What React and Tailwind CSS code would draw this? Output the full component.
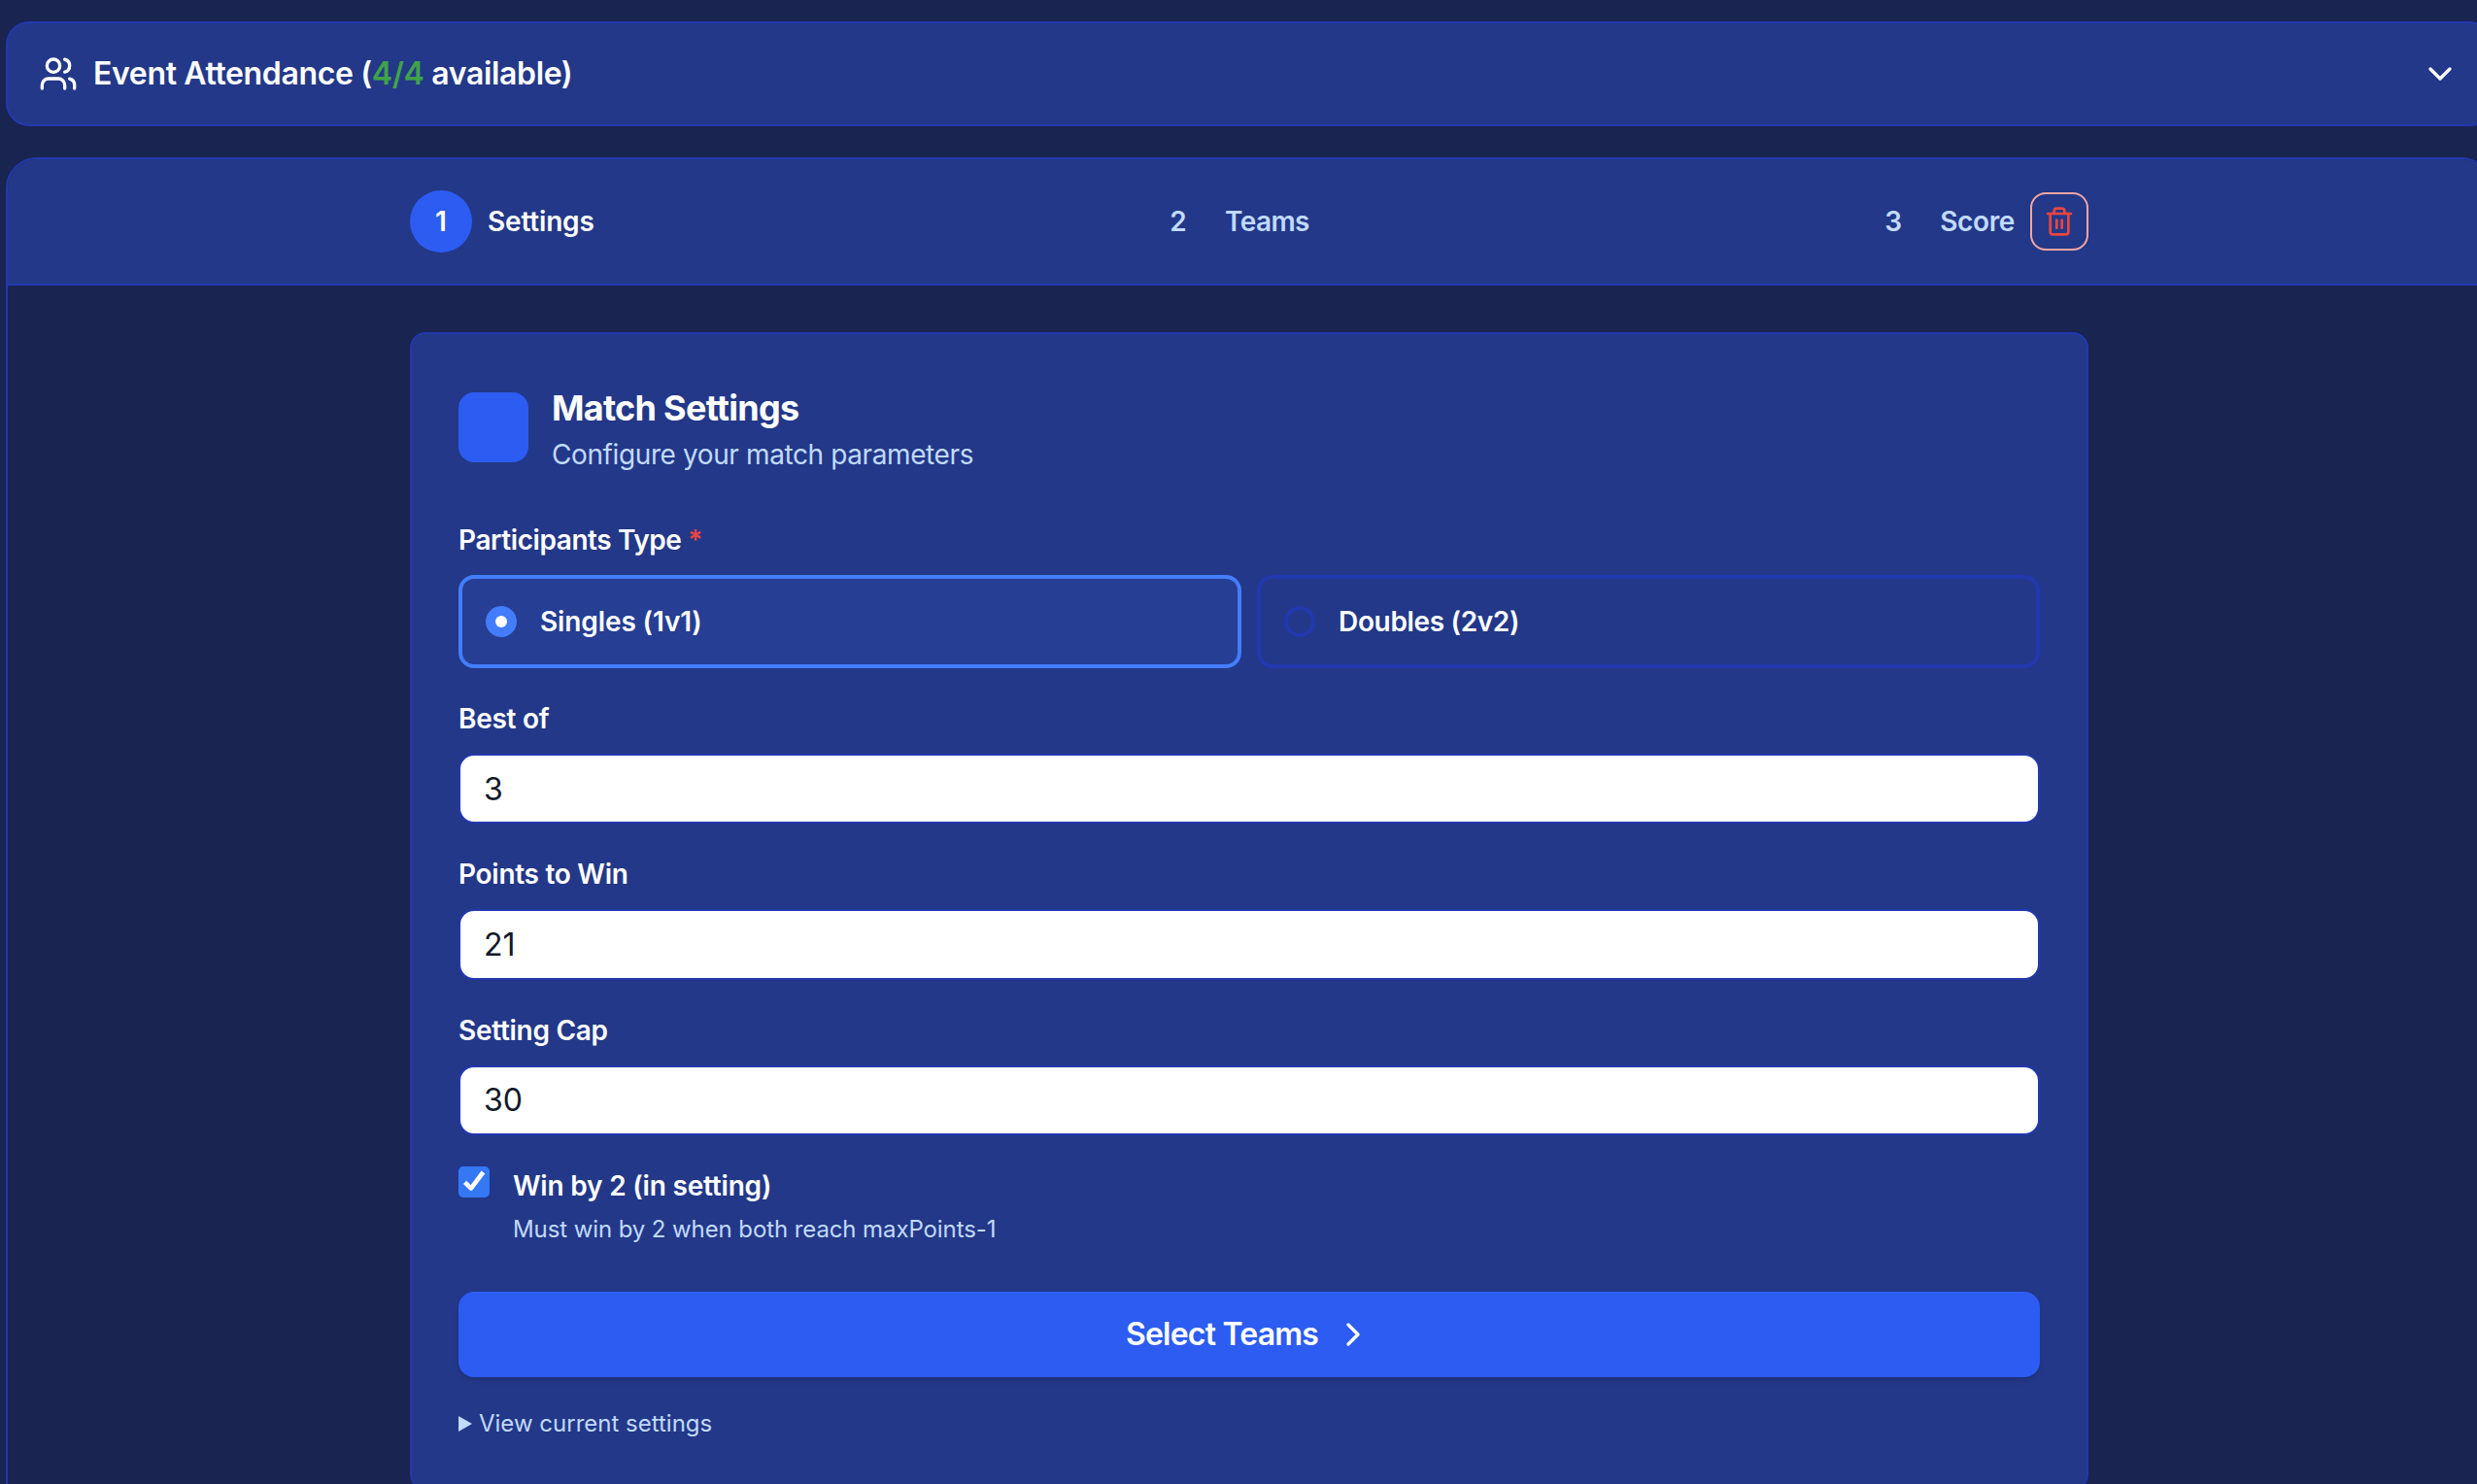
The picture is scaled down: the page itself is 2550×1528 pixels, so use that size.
import React, { useState } from 'react';
import { Users, ChevronDown, ChevronRight, Trash2 } from 'lucide-react';

const steps = [
  { id: 1, label: 'Settings', tracking: 'tracking-[-0.006em]' },
  { id: 2, label: 'Teams', tracking: 'tracking-[-0.022em]' },
  { id: 3, label: 'Score', tracking: 'tracking-[-0.013em]' }
];

const participantTypes = [
  { id: 'singles', label: 'Singles (1v1)', tracking: 'tracking-[-0.004em]' },
  { id: 'doubles', label: 'Doubles (2v2)', tracking: 'tracking-[-0.012em]' }
];

const Attendance = () => (
  <button className="flex h-[108px] w-full items-center rounded-3xl border-2 border-[#2238af] bg-[#233888] px-8 text-white">
    <Users size={40} />
    <span className="ml-4 text-[32px] leading-none font-semibold tracking-[-0.011em]">
      Event Attendance (<span className="text-[#3fa34a]">4/4</span> available)
    </span>
    <ChevronDown size={40} className="ml-auto" />
  </button>
);

const Stepper = ({ current }) => (
  <div className="border-b-2 border-[#2238af] bg-[#233888] py-8">
    <div className="mx-auto flex w-[1728px] items-center gap-4">
      <div className="flex flex-1 items-center justify-between">
        {steps.map(step => (
          <div
            key={step.id}
            className={`flex items-center gap-4 text-[28px] leading-none ${
              step.id === current ? 'text-white' : 'text-[#c1daff]'
            }`}
          >
            <div
              className={`flex h-16 w-16 items-center justify-center rounded-full font-semibold ${
                step.id === current ? 'bg-[#2c5cf2]' : ''
              }`}
            >
              {step.id}
            </div>
            <span className={`font-[560] ${step.tracking}`}>{step.label}</span>
          </div>
        ))}
      </div>
      <button className="flex h-[60px] w-[60px] items-center justify-center rounded-2xl border-2 border-[#f5a5a3] text-[#ea4540]">
        <Trash2 size={32} />
      </button>
    </div>
  </div>
);

const Field = ({ label, value, className }) => (
  <div className={className}>
    <label className="block text-[28px] leading-10 font-[560] tracking-[-0.01em] text-white">{label}</label>
    <input
      type="text"
      defaultValue={value}
      className="mt-4 block h-[72.4px] w-full rounded-2xl border-2 border-[#2238af] bg-white px-6 text-[32px] text-[#101828]"
    />
  </div>
);

const MatchSettings = () => {
  const [type, setType] = useState('singles');
  const [winByTwo, setWinByTwo] = useState(true);

  return (
    <div className="mx-auto h-[1192px] w-[1728px] rounded-2xl border-2 border-[#2238af] bg-[#233888] px-12 pt-12">
      {/* Title */}
      <div className="flex items-center gap-6">
        <div className="h-[72px] w-[72px] rounded-2xl bg-[#2c5cf2]" />
        <div className="h-24">
          <h2 className="text-4xl leading-[56px] font-bold tracking-[-0.02em] text-white">Match Settings</h2>
          <p className="text-[28px] leading-10 tracking-[-0.014em] text-[#c1daff]">
            Configure your match parameters
          </p>
        </div>
      </div>

      {/* Participants */}
      <div className="mt-12">
        <div className="text-[28px] leading-10 font-[560] tracking-[-0.015em] text-white">
          Participants Type <span className="text-[#ea4540]">*</span>
        </div>
        <div className="mt-4 grid grid-cols-2 gap-4">
          {participantTypes.map(option => (
            <button
              key={option.id}
              onClick={() => setType(option.id)}
              className={`flex h-24 items-center gap-6 rounded-2xl border-4 px-6 ${
                type === option.id ? 'border-[#437dfc] bg-[#263e93]' : 'border-[#2238af]'
              }`}
            >
              <span
                className={`flex h-8 w-8 items-center justify-center rounded-full border-4 ${
                  type === option.id ? 'border-[#437dfc] bg-[#437dfc]' : 'border-[#2238af]'
                }`}
              >
                {type === option.id && <span className="h-3 w-3 rounded-full bg-white" />}
              </span>
              <span className={`text-[28px] leading-none font-[560] text-white ${option.tracking}`}>
                {option.label}
              </span>
            </button>
          ))}
        </div>
      </div>

      <Field label="Best of" value="3" className="mt-8" />
      <Field label="Points to Win" value="21" className="mt-8" />
      <Field label="Setting Cap" value="30" className="mt-8" />

      {/* Win by 2 */}
      <label className="mt-8 flex gap-6">
        <input
          type="checkbox"
          checked={winByTwo}
          onChange={() => setWinByTwo(!winByTwo)}
          className="peer sr-only"
        />
        <span className="h-8 w-8 rounded-[5px] bg-[#3478f6]">
          {winByTwo && (
            <svg viewBox="0 0 32 32" className="h-8 w-8" fill="none" stroke="white" strokeWidth="4.6">
              <path d="M6.6 16.4 12.9 22.6 25.4 6" strokeLinejoin="round" />
            </svg>
          )}
        </span>
        <span>
          <span className="block text-[28px] leading-10 font-[560] tracking-[-0.007em] text-white">
            Win by 2 (in setting)
          </span>
          <span className="mt-[9px] block text-2xl tracking-[-0.004em] text-[#c1daff]">
            Must win by 2 when both reach maxPoints-1
          </span>
        </span>
      </label>

      <button className="mt-12 flex h-[88px] w-full items-center justify-center gap-4 rounded-2xl bg-[#2c5cf2] text-[32px] font-[560] tracking-[-0.025em] text-white shadow-md">
        Select Teams
        <ChevronRight size={40} />
      </button>

      <div className="mt-8 flex items-center gap-[7px] text-2xl text-[#c1daff]">
        <svg width="14" height="16" viewBox="0 0 14 16" fill="currentColor">
          <path d="M0 0 14 8 0 16z" />
        </svg>
        View current settings
      </div>
    </div>
  );
};

export default function App() {
  return (
    <div className="h-[1528px] w-full overflow-hidden bg-[#192450] font-['Inter',sans-serif]">
      <div className="ml-1.5 w-[2560px] pt-[22px]">
        <Attendance />
        <div className="mt-8 h-[1500px] overflow-hidden rounded-[32px] border-2 border-[#2238af]">
          <Stepper current={1} />
          <div className="pt-12">
            <MatchSettings />
          </div>
        </div>
      </div>
    </div>
  );
}
